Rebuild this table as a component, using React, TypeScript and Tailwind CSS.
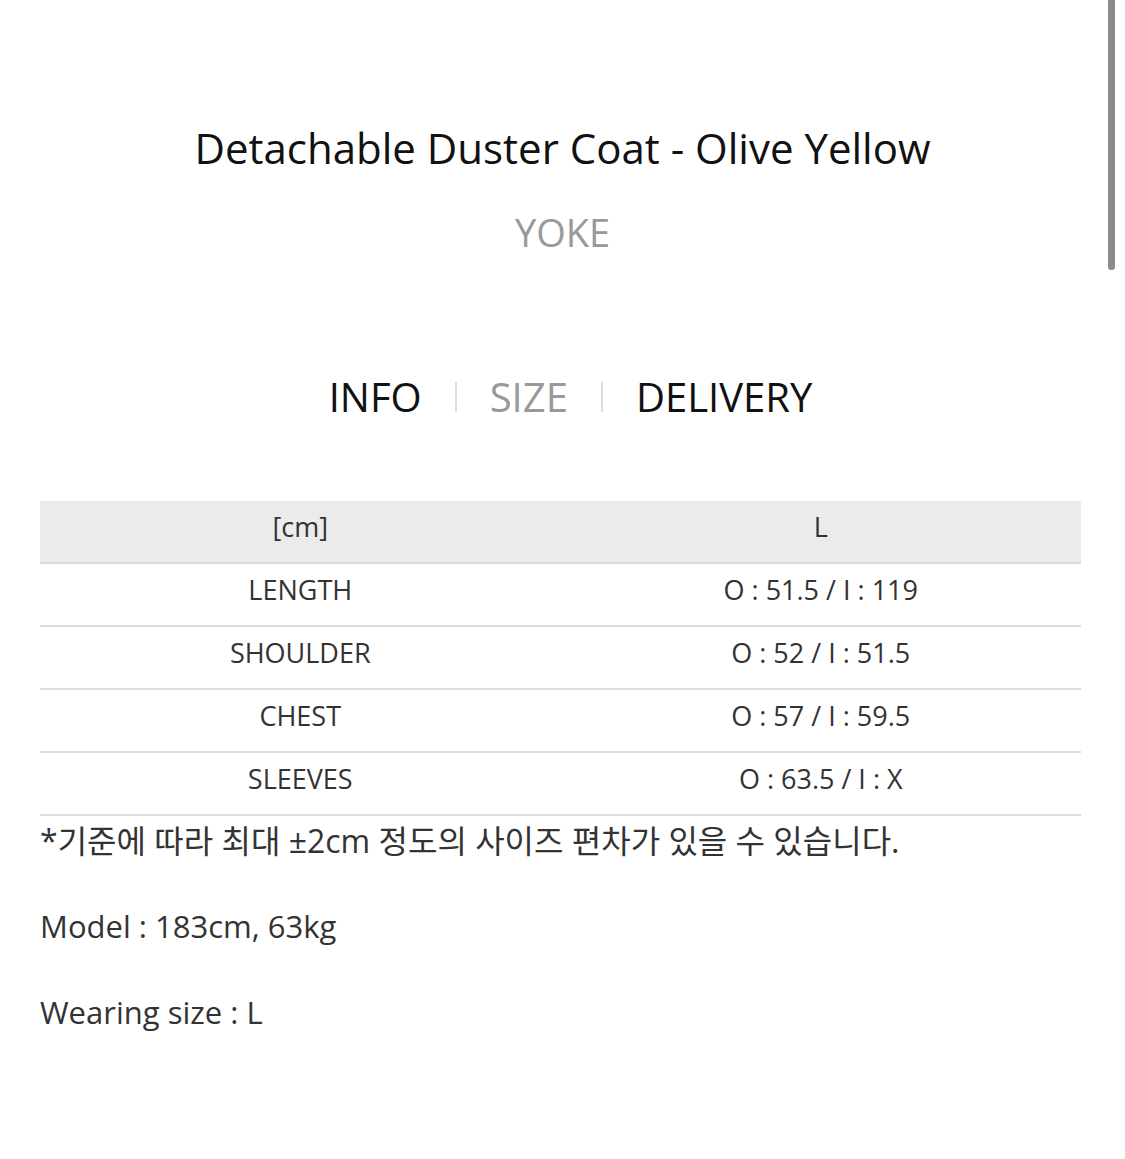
const rows = [
  { label: "LENGTH", value: "O : 51.5 / I : 119" },
  { label: "SHOULDER", value: "O : 52 / I : 51.5" },
  { label: "CHEST", value: "O : 57 / I : 59.5" },
  { label: "SLEEVES", value: "O : 63.5 / I : X" },
];

const font = { fontFamily: "'Open Sans', 'Noto Sans CJK KR', sans-serif" };

export default function App() {
  return (
    <div className="relative w-[1125px] h-[1159px] bg-white overflow-hidden" style={font}>
      {/* scrollbar */}
      <div className="absolute right-[10px] top-0 w-[7px] h-[270px] rounded-b-full bg-[#8a8a8a]" />

      <div className="pt-[118px] flex flex-col items-center">
        <h1 className="text-[42px] leading-[60px] text-[#111]">
          Detachable Duster Coat - Olive Yellow
        </h1>
        <div className="mt-[29px] text-[38px] leading-[50px] text-[#999]">YOKE</div>

        <div className="mt-[110px] pl-[16px] flex items-center text-[40px] leading-[60px]">
          <span className="text-[#111]">INFO</span>
          <span className="mx-[33px] w-[2px] h-[30px] bg-[#ddd]" />
          <span className="text-[#999]">SIZE</span>
          <span className="mx-[33px] w-[2px] h-[30px] bg-[#ddd]" />
          <span className="text-[#111]">DELIVERY</span>
        </div>
      </div>

      <div className="mx-[40px] w-[1041px] mt-[74px]">
        <div className="grid grid-cols-2 h-[63px] pb-[8px] bg-[#ebebeb] border-b-2 border-[#dcdcdc] items-center text-[27px] text-[#333]">
          <div className="text-center">[cm]</div>
          <div className="text-center">L</div>
        </div>
        {rows.map((r) => (
          <div
            key={r.label}
            className="grid grid-cols-2 h-[63px] pb-[8px] border-b-2 border-[#dcdcdc] items-center text-[27px] text-[#333]"
          >
            <div className="text-center">{r.label}</div>
            <div className="text-center">{r.value}</div>
          </div>
        ))}

        <div className="text-[32px] leading-[50px] text-[#333]">
          *기준에 따라 최대 ±2cm 정도의 사이즈 편차가 있을 수 있습니다.
        </div>
        <div className="mt-[35px] text-[31px] leading-[50px] text-[#333]">Model : 183cm, 63kg</div>
        <div className="mt-[36px] text-[31px] leading-[50px] text-[#333]">Wearing size : L</div>
      </div>
    </div>
  );
}
